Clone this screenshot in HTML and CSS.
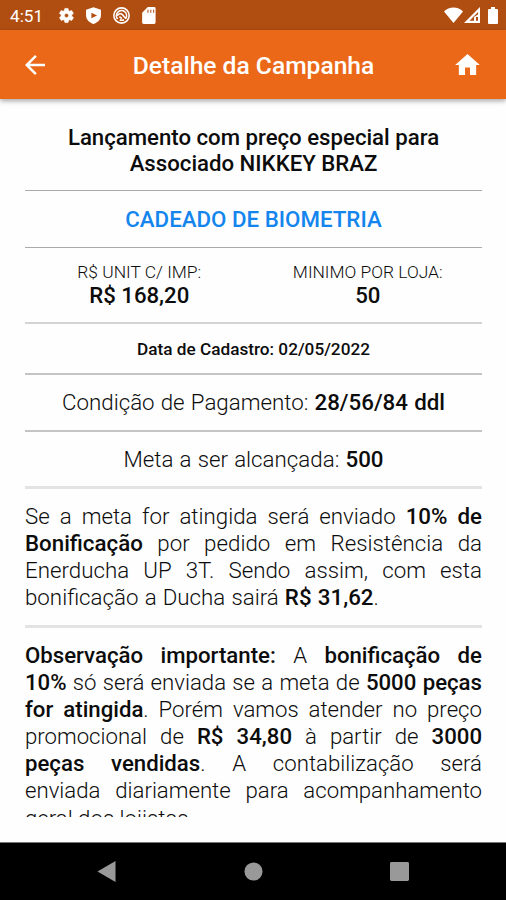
FILE: index.html
```
<!DOCTYPE html>
<html lang="pt-BR">
<head>
  <meta charset="utf-8">
  <title>Detalhe da Campanha</title>
  <link rel="stylesheet" href="styles.css">
</head>
<body>
  <div class="status">
    <span class="time">4:51</span>
    <svg class="icon-status" viewBox="0 0 24 24"><path d="M19.4 13c.1-.7.1-1.3 0-2l2.1-1.6c.2-.2.3-.4.1-.7l-2-3.4c-.1-.2-.4-.3-.6-.2l-2.5 1a7 7 0 0 0-1.7-1l-.4-2.6c0-.3-.2-.5-.5-.5h-4c-.3 0-.5.2-.5.5L9 5.1a7 7 0 0 0-1.7 1l-2.5-1c-.2-.1-.5 0-.6.2l-2 3.4c-.1.3-.1.5.1.7L4.500 11c-.1.7-.1 1.3 0 2l-2.100 1.600c-.2.2-.3.4-.1.7l2 3.400c.1.2.4.3.6.2l2.500-1a7 7 0 0 0 1.700 1l.4 2.600c0 .3.2.5.5.5h4c.3 0 .5-.2.5-.5l.4-2.600a7 7 0 0 0 1.700-1l2.500 1c.2.1.5 0 .6-.2l2-3.400c.1-.2.1-.5-.1-.7zM12 15a3 3 0 1 1 0-6 3 3 0 0 1 0 6z" stroke="#fff" stroke-width=".8"/></svg>
    <svg class="icon-status" viewBox="0 0 24 24"><path fill-rule="evenodd" d="M12 0.500 1.500 4v8c0 5.500 4.500 10 10.500 12 6-2 10.500-6.500 10.500-12V4zM9 8l8 4-8 4z"/></svg>
    <svg class="icon-status" viewBox="0 0 24 24"><g fill="none" stroke="#fff" stroke-width="2.200"><circle cx="12" cy="12" r="10.800"/><path d="M6.500 17a7.200 7.200 0 1 1 11.500-.8M6 12.500c2-3.500 5.500-4 7.500-1.500l4.500 5.200M9.500 18c2 1 4 1 6 0M9 13.500l3.500 3"/></g></svg>
    <svg class="icon-status" viewBox="0 0 24 24"><path fill-rule="evenodd" d="M20 0h-9L3 8v14a2 2 0 0 0 2 2h15a2 2 0 0 0 2-2V2a2 2 0 0 0-2-2zM10.500 4h1.500v4h-1.500zm4 0h1.500v4h-1.500zm4 0h1.500v4h-1.500z"/></svg>
    <div class="signals">
      <svg class="wifi" viewBox="0 0 19 16"><path d="M0 4.500C5-1 14-1 19 4.500L9.500 16z"/></svg>
      <svg class="cell" viewBox="0 0 16 16"><path fill-rule="evenodd" d="M16 0v16H0zM14 5l-8.500 8.800H10V10l4-2.500zM12 10v3.800h2V10z"/></svg>
      <svg class="battery" viewBox="0 0 10 17"><path d="M3 0h4v2h2a1 1 0 0 1 1 1v13a1 1 0 0 1-1 1H1a1 1 0 0 1-1-1V3a1 1 0 0 1 1-1h2z"/></svg>
    </div>
  </div>
  <div class="appbar">
    <svg class="back" viewBox="4 4 16 16"><path d="M20 11H7.830l5.590-5.590L12 4l-8 8 8 8 1.410-1.410L7.830 13H20z"/></svg>
    <h1>Detalhe da Campanha</h1>
    <svg class="home" viewBox="2 3 20 17"><path d="M10 20v-6h4v6h5v-8h3L12 3 2 12h3v8z"/></svg>
  </div>

  <div class="content">
    <div class="row title">Lançamento com preço especial para<br>Associado NIKKEY BRAZ</div>
    <div class="row product">CADEADO DE BIOMETRIA</div>
    <div class="row values">
      <div class="value"><span class="label">R$ UNIT C/ IMP:</span><b>R$ 168,20</b></div>
      <div class="value"><span class="label">MINIMO POR LOJA:</span><b>50</b></div>
    </div>
    <div class="row date">Data de Cadastro: 02/05/2022</div>
    <div class="row info payment"><p>Condição de Pagamento: <b>28/56/84 ddl</b></p></div>
    <div class="row info goal"><p>Meta a ser alcançada: <b>500</b></p></div>
    <p class="text bonus">Se a meta for atingida será enviado <b>10% de Bonificação</b> por pedido em Resistência da Enerducha UP 3T. Sendo assim, com esta bonificação a Ducha sairá <b>R$ 31,62</b>.</p>
    <p class="text note"><b>Observação importante:</b> A <b>bonificação de 10%</b>&nbsp;só será enviada se a meta de <b>5000 peças for atingida</b>. Porém vamos atender no preço promocional de <b>R$ 34,80</b> à partir de <b>3000 peças vendidas</b>. A contabilização será enviada&nbsp;diariamente para acompanhamento geral dos lojistas.</p>
  </div>

  <div class="navbar">
    <svg class="nav-back" viewBox="0 0 18 21"><path d="M18 0v21L0 10.500z"/></svg>
    <svg viewBox="0 0 20 20"><circle cx="10" cy="10" r="9.500"/></svg>
    <svg viewBox="0 0 20 20"><rect width="20" height="20" rx="1.500"/></svg>
  </div>
</body>
</html>
```

FILE: styles.css
```
* {
  box-sizing: border-box;
}

body {
  margin: 0;
  height: 900px;
  display: flex;
  flex-direction: column;
  overflow: hidden;
  background: #fefefe;
  color: #0c0c0c;
  font-family: Roboto, sans-serif;
}

svg {
  display: block;
  fill: #fff;
}

h1, p {
  margin: 0;
}

b {
  font-weight: 500;
}

.status {
  height: 30px;
  flex: none;
  display: flex;
  align-items: center;
  padding: 0 8px 0 10px;
  background: #b04e12;
  color: #fff;
}

.time {
  width: 48px;
  font-size: 17.2px;
  padding-top: 2px;
}

.icon-status {
  width: 17px;
  height: 17px;
  margin-right: 10.3px;
}

.signals {
  display: flex;
  align-items: center;
  margin-left: auto;
}

.wifi {
  width: 19px;
  height: 16px;
}

.cell {
  width: 16px;
  height: 16px;
  margin: 0 8px 0 1px;
}

.battery {
  width: 10px;
  height: 17px;
}

.appbar {
  height: 69px;
  flex: none;
  display: flex;
  align-items: center;
  justify-content: space-between;
  padding: 0 26px 0 25px;
  background: #eb6819;
  color: #fff;
  box-shadow: 0 2px 5px rgba(0, 0, 0, .35);
}

.appbar h1 {
  font-size: 24.6px;
  font-weight: 500;
  line-height: 30px;
  padding: 2px 0 0 7px;
}

.back {
  width: 20px;
  height: 20px;
}

.home {
  width: 25px;
  height: 21px;
}

.content {
  flex: none;
  height: 718px;
  margin: 0 24px 25px 25px;
  padding-top: 20px;
  overflow: hidden;
}

.row {
  display: flex;
  align-items: center;
  justify-content: center;
  text-align: center;
  border-bottom: 2px solid #c4c4c4;
}

.title {
  height: 72px;
  padding-bottom: 9px;
  border-bottom: 1px solid #aaa;
  font-size: 22.2px;
  font-weight: 500;
  line-height: 26px;
}

.product {
  height: 57px;
  padding-bottom: 1px;
  border-bottom: 1px solid #aaa;
  color: #1585ee;
  font-size: 22.3px;
  font-weight: 500;
}

.values {
  height: 76px;
  align-items: flex-start;
  padding-top: 14px;
  border-color: #d4d4d4;
}

.value {
  flex: 1;
  display: flex;
  flex-direction: column;
}

.value b {
  font-size: 22.2px;
  line-height: 27px;
}

.label {
  font-size: 17.4px;
  font-weight: 300;
  line-height: 20px;
}

.date {
  height: 51px;
  font-size: 17.2px;
  font-weight: 500;
}

.info {
  height: 57px;
  font-size: 22.3px;
  font-weight: 300;
  word-spacing: .7px;
}

.payment {
  padding-bottom: 1px;
}

.goal {
  border-bottom: 3px solid #e3e3e3;
}

.text {
  font-size: 22.2px;
  font-weight: 300;
  line-height: 27.1px;
  text-align: justify;
}

.bonus {
  height: 139px;
  padding-top: 14px;
  border-bottom: 3px solid #e3e3e3;
  font-size: 22.3px;
  word-spacing: .7px;
}

.note {
  padding-top: 14px;
}

.navbar {
  flex: 1;
  display: flex;
  align-items: center;
  justify-content: space-between;
  padding: 0 97px;
  background: #000;
  border-top: 1px solid #777;
}

.navbar svg {
  width: 19px;
  height: 19px;
  fill: #999;
}

.navbar .nav-back {
  height: 21px;
}
```
